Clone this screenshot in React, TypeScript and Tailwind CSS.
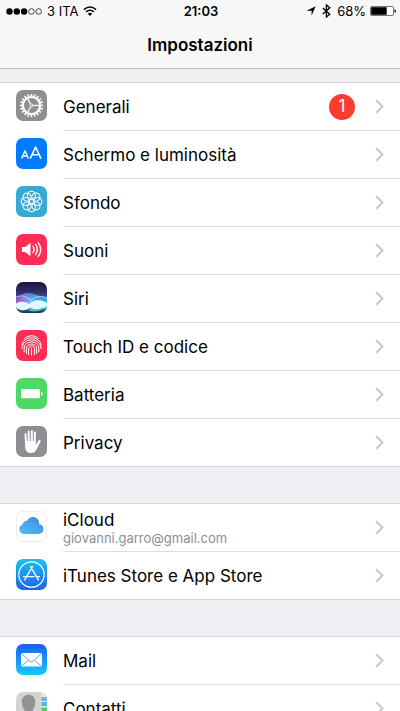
import type { ReactNode } from 'react';

const rays = (count: number) => Array.from({ length: count }, (_, i) => (i * 360) / count);

function Tile({ color, children }: { color: string; children: ReactNode }) {
  return (
    <svg viewBox="0 0 31 31" className="size-[31px] shrink-0" aria-hidden="true">
      <rect width="31" height="31" rx="7" fill={color} />
      {children}
    </svg>
  );
}

function GearIcon() {
  return (
    <Tile color="#8e8e93">
      <g stroke="#fff" fill="none">
        {rays(20).map((a) => (
          <path key={a} d="M15.5 3.9v3" strokeWidth="1.7" transform={`rotate(${a} 15.5 15.5)`} />
        ))}
        <circle cx="15.5" cy="15.5" r="8.5" strokeWidth="2" />
        <circle cx="15.5" cy="15.5" r="1.4" strokeWidth="1" />
        {[90, 210, 330].map((a) => (
          <path key={a} d="M15.5 13.9V7.5" strokeWidth="1.2" transform={`rotate(${a} 15.5 15.5)`} />
        ))}
      </g>
    </Tile>
  );
}

function DisplayIcon() {
  return (
    <Tile color="#007aff">
      <g stroke="#fff" fill="none" strokeLinejoin="round">
        <path d="M5.7 20.5 9 12.7l3.3 7.8M6.8 18h4.4" strokeWidth="1.4" />
        <path d="M14.2 20.7 19.6 9 25 20.7M16 16.8h7.2" strokeWidth="1.6" />
      </g>
    </Tile>
  );
}

function WallpaperIcon() {
  return (
    <Tile color="#36a9d6">
      <g stroke="#fff" fill="none" strokeWidth="1.1">
        {rays(8).map((a) => (
          <circle key={a} cx="15.5" cy="9.2" r="4" transform={`rotate(${a} 15.5 15.5)`} />
        ))}
        <circle cx="15.5" cy="15.5" r="2.3" />
      </g>
    </Tile>
  );
}

function SoundIcon() {
  return (
    <Tile color="#ff2d55">
      <path d="M6 13h3.2l5.3-4.2v13.4L9.2 18H6z" fill="#fff" />
      <g stroke="#fff" fill="none" strokeWidth="1.4" strokeLinecap="round">
        <path d="M17 12.4q2.2 3.1 0 6.2" />
        <path d="M19.6 10.4q3.6 5.1 0 10.2" />
        <path d="M22.2 8.6q5 6.9 0 13.8" />
      </g>
    </Tile>
  );
}

function SiriIcon() {
  return (
    <svg viewBox="0 0 31 31" className="size-[31px] shrink-0" aria-hidden="true">
      <defs>
        <linearGradient id="siri-bg" x2="0" y2="1">
          <stop offset="0" stopColor="#17163a" />
          <stop offset="0.35" stopColor="#35306e" />
          <stop offset="0.6" stopColor="#5a6cc0" />
          <stop offset="0.85" stopColor="#3677a0" />
          <stop offset="1" stopColor="#17344d" />
        </linearGradient>
        <linearGradient id="siri-wave">
          <stop offset="0" stopColor="#c63fd0" />
          <stop offset="0.35" stopColor="#7f9cf5" />
          <stop offset="0.7" stopColor="#46c4f2" />
          <stop offset="1" stopColor="#2fb4e6" />
        </linearGradient>
        <clipPath id="siri-clip">
          <rect width="31" height="31" rx="7" />
        </clipPath>
      </defs>
      <g clipPath="url(#siri-clip)">
        <rect width="31" height="31" fill="url(#siri-bg)" />
        <path d="M0 16c4-3 7-5 12-5 7 0 10 4 19 4v10c-9 4-13 3-17 0s-9-1-14 1z" fill="url(#siri-wave)" opacity=".7" />
        <path d="M0 22c5-8 12-9 18-5s8 1 13 0v9c-7 3-14 4-18 1s-8-2-13 0z" fill="url(#siri-wave)" opacity=".9" />
        <path d="M0 21.500c4-2.500 9-2 13 .5 5-5 13-4.500 18-1v3c-5 4-12 4.500-17 1.500-4 3.500-10 3.500-14 0z" fill="#e4fcff" />
        <path d="M0 15c8-3 12 1 17 5s9 6 14 5M0 25c7 1 10-2 14-6S25 13 31 16" fill="none" stroke="#b8f4fb" strokeWidth=".8" opacity=".8" />
        <path d="M13 28q8 2 14-2" fill="none" stroke="#4fc4b4" strokeWidth="1.200" />
      </g>
    </svg>
  );
}

function TouchIcon() {
  return (
    <Tile color="#ff2d55">
      <g stroke="#fff" fill="none" strokeWidth="1" strokeLinecap="round">
        <path d="M8.600 8.300Q11.500 5.700 15.500 5.700T22.400 8.300" />
        <path d="M5.900 14.800C6.500 10.500 10.500 7.800 15.500 7.800s9 2.700 9.600 7" />
        <path d="M6 18.600C6 13.400 10 9.900 15.500 9.900s9.500 3.500 9.500 8.700" />
        <path d="M8.200 21.800v-3.600c0-3.800 3.200-6.200 7.300-6.200s7.300 2.400 7.300 6.200v3.600" />
        <path d="M10.400 23.500v-5c0-2.700 2.100-4.400 5.100-4.400s5.100 1.700 5.100 4.400v5" />
        <path d="M12.600 24.600v-5.800c0-1.600 1.100-2.700 2.900-2.700s2.900 1.100 2.900 2.700v5.800" />
        <path d="M15.500 18.300v7" />
      </g>
    </Tile>
  );
}

function BatteryTileIcon() {
  return (
    <Tile color="#4cd964">
      <rect x="5" y="11" width="19" height="9.200" rx="1.300" fill="#fff" />
      <path d="M25 13.700h.6q.9 0 .9.900v2q0 .9-.9.900H25z" fill="#fff" />
    </Tile>
  );
}

function HandIcon() {
  return (
    <Tile color="#8e8e93">
      <g stroke="#fff" strokeLinecap="round" strokeWidth="2">
        <path d="M9.500 8.300l.6 9M12.600 5.800l.3 11M15.800 5v11M18.900 6.600l-.3 10" />
      </g>
      <path
        d="M9 15h10.700v4l3-4.500c.7-.9 2.300-.5 2 .6l-3.500 7.200c-1.200 2.900-2.900 4.800-5.900 4.800-3.900 0-5.900-2.300-6.100-5.900z"
        fill="#fff"
      />
    </Tile>
  );
}

function CloudIcon() {
  return (
    <svg viewBox="0 0 31 31" className="size-[31px] shrink-0" aria-hidden="true">
      <defs>
        <linearGradient id="cloud" x1="0" y1="1" x2="1" y2="0">
          <stop offset="0" stopColor="#54b9f3" />
          <stop offset="0.55" stopColor="#4aa3ea" />
          <stop offset="1" stopColor="#2c80dd" />
        </linearGradient>
      </defs>
      <rect x=".5" y=".5" width="30" height="30" rx="6.5" fill="#fff" stroke="#ececee" />
      <path
        d="M7.800 23a4.900 4.900 0 0 1-1.200-9.500 3.900 3.900 0 0 1 4.500-3.700 6.300 6.300 0 0 1 12 3.500A4.900 4.900 0 0 1 23.300 23z"
        fill="url(#cloud)"
      />
    </svg>
  );
}

function StoreIcon() {
  return (
    <svg viewBox="0 0 31 31" className="size-[31px] shrink-0" aria-hidden="true">
      <defs>
        <linearGradient id="store" x2="0" y2="1">
          <stop offset="0" stopColor="#19c3f2" />
          <stop offset="1" stopColor="#1c62ee" />
        </linearGradient>
      </defs>
      <rect width="31" height="31" rx="7" fill="url(#store)" />
      <g stroke="#fff" fill="none" strokeLinecap="round">
        <circle cx="15.5" cy="15.5" r="12.700" strokeWidth="1.200" />
        <path d="M14.500 7.500l7.900 13.300M16.500 7.500L8.600 20.800M7.500 17.600h10.500M21 17.600h2.500" strokeWidth="1.400" />
      </g>
    </svg>
  );
}

function MailIcon() {
  return (
    <svg viewBox="0 0 31 31" className="size-[31px] shrink-0" aria-hidden="true">
      <defs>
        <linearGradient id="mail" x2="0" y2="1">
          <stop offset="0" stopColor="#1e5dee" />
          <stop offset="1" stopColor="#1bc8fb" />
        </linearGradient>
      </defs>
      <rect width="31" height="31" rx="7" fill="url(#mail)" />
      <rect x="5" y="9" width="21" height="13.5" rx="1.5" fill="#fff" />
      <path d="M5.500 9.500l8.500 7.800q1.500 1.300 3 0l8.500-7.800M5.700 22l7-6M25.300 22l-7-6" fill="none" stroke="#5b9be0" strokeWidth=".9" />
    </svg>
  );
}

function ContactsIcon() {
  return (
    <svg viewBox="0 0 31 31" className="size-[31px] shrink-0" aria-hidden="true">
      <defs>
        <clipPath id="contacts-clip">
          <rect width="31" height="31" rx="7" />
        </clipPath>
      </defs>
      <g clipPath="url(#contacts-clip)">
        <rect width="31" height="31" fill="#d3d3d1" />
        <path d="M25 0h6v31h-6z" fill="#e6e6e4" />
        <path d="M25.500 5h5.500v4h-5.500z" fill="#63b6e6" />
        <path d="M25.500 10h5.500v4h-5.500z" fill="#56aee4" />
        <path d="M25.500 15.500h5.500v5h-5.500z" fill="#4ccf62" />
        <path d="M25.500 22h5.500v5h-5.500z" fill="#f5a33a" />
        <path d="M12.500 3c4.600 0 6.900 2.700 6.700 7-.1 4-.8 6-2.500 7.500v1c2 1.500 7 2 7.500 6V31H1v-6.500c.5-4 5.500-4.500 7.500-6v-1C6.800 16 5.900 14 5.800 10c-.2-4.300 2.100-7 6.700-7z" fill="#929290" />
      </g>
    </svg>
  );
}

function Chevron() {
  return (
    <svg viewBox="0 0 9 15" className="h-[15px] w-[9px] shrink-0" aria-hidden="true">
      <path d="M1.200 1.200l6.300 6.300-6.300 6.300" fill="none" stroke="#c7c7cc" strokeWidth="2" />
    </svg>
  );
}

type Item = { label: string; icon: ReactNode; detail?: string; badge?: number };

const groups: Item[][] = [
  [
    { label: 'Generali', icon: <GearIcon />, badge: 1 },
    { label: 'Schermo e luminosità', icon: <DisplayIcon /> },
    { label: 'Sfondo', icon: <WallpaperIcon /> },
    { label: 'Suoni', icon: <SoundIcon /> },
    { label: 'Siri', icon: <SiriIcon /> },
    { label: 'Touch ID e codice', icon: <TouchIcon /> },
    { label: 'Batteria', icon: <BatteryTileIcon /> },
    { label: 'Privacy', icon: <HandIcon /> },
  ],
  [
    { label: 'iCloud', icon: <CloudIcon />, detail: 'giovanni.garro@gmail.com' },
    { label: 'iTunes Store e App Store', icon: <StoreIcon /> },
  ],
  [
    { label: 'Mail', icon: <MailIcon /> },
    { label: 'Contatti', icon: <ContactsIcon /> },
  ],
];

function Row({ item }: { item: Item }) {
  return (
    <li className="group last:border-b last:border-[#d4d4d8]">
      <a href="#" className="flex h-12 gap-4 pl-4 group-last:h-[47px]">
        <span className="pt-[7px]">{item.icon}</span>
        <span className="flex flex-1 items-center border-b border-[#dedee1] pr-4 group-last:border-b-0">
          <span className="flex flex-1 flex-col">
            <span className={item.detail ? 'text-[17px] leading-5' : 'text-[17px] leading-6'}>{item.label}</span>
            {item.detail && <span className="text-[13px] leading-4 text-[#8e8e93]">{item.detail}</span>}
          </span>
          {item.badge && (
            <span className="mr-5 flex size-[26px] items-center justify-center rounded-full bg-[#ff3b30] text-[17px] leading-none text-white">
              {item.badge}
            </span>
          )}
          <Chevron />
        </span>
      </a>
    </li>
  );
}

function StatusBar() {
  return (
    <div className="grid h-[22px] grid-cols-3 items-center pr-1 pl-1.5 text-[13px] leading-4">
      <div className="flex items-center gap-1">
        <svg viewBox="0 0 37 7" className="h-[7px] w-[37px]" aria-hidden="true">
          {[3.5, 10.8, 18.1].map((x) => (
            <circle key={x} cx={x} cy="3.5" r="3.2" />
          ))}
          {[25.4, 32.7].map((x) => (
            <circle key={x} cx={x} cy="3.5" r="2.8" fill="none" stroke="#000" strokeWidth=".7" />
          ))}
        </svg>
        <span>3 ITA</span>
        <svg viewBox="0 0 14 10" className="ml-px h-[10px] w-[14px]" aria-hidden="true">
          <g fill="none" stroke="#000" strokeWidth="1.5">
            <path d="M.9 3.600q6.100-5.200 12.200 0" />
            <path d="M3.100 5.900q3.900-3.200 7.800 0" />
          </g>
          <path d="M4.900 7.700q2.100-1.700 4.200 0L7 9.900z" />
        </svg>
      </div>
      <div className="text-center font-semibold">21:03</div>
      <div className="flex items-center justify-end gap-1">
        <svg viewBox="0 0 10 10" className="mr-0.5 size-[10px]" aria-hidden="true">
          <path d="M9.700.3L5.600 9.600V4.700H.5z" />
        </svg>
        <svg viewBox="0 0 9 14" className="mr-0.5 h-[14px] w-[9px]" aria-hidden="true">
          <path d="M.8 3.900l7 6.300L4.400 13V1l3.400 2.800-7 6.300" fill="none" stroke="#000" strokeWidth="1.300" />
        </svg>
        <span>68%</span>
        <svg viewBox="0 0 26 10" className="h-[10px] w-[26px]" aria-hidden="true">
          <rect x=".5" y=".5" width="23" height="9" rx="1.5" fill="#fff" stroke="#555" strokeWidth=".8" />
          <path d="M1.200 1.200h15.500v7.600H1.200z" />
          <path d="M24.500 3.200q1.500.4 1.500 1.800t-1.500 1.800z" />
        </svg>
      </div>
    </div>
  );
}

export default function App() {
  return (
    <div className="flex h-screen flex-col overflow-hidden bg-[#efeff4] font-['Inter','Liberation_Sans',sans-serif] text-black">
      <header className="shrink-0 border-b border-[#b8b8bd] bg-[#f7f7f7]">
        <StatusBar />
        <h1 className="py-[11px] text-center text-[17px] leading-6 font-semibold">Impostazioni</h1>
      </header>
      <main className="flex min-h-0 flex-1 flex-col gap-9 overflow-y-auto pt-[13px] [scrollbar-width:none]">
        {groups.map((items) => (
          <ul key={items[0].label} className="shrink-0 border-t border-[#d4d4d8] bg-white">
            {items.map((item) => (
              <Row key={item.label} item={item} />
            ))}
          </ul>
        ))}
      </main>
    </div>
  );
}
